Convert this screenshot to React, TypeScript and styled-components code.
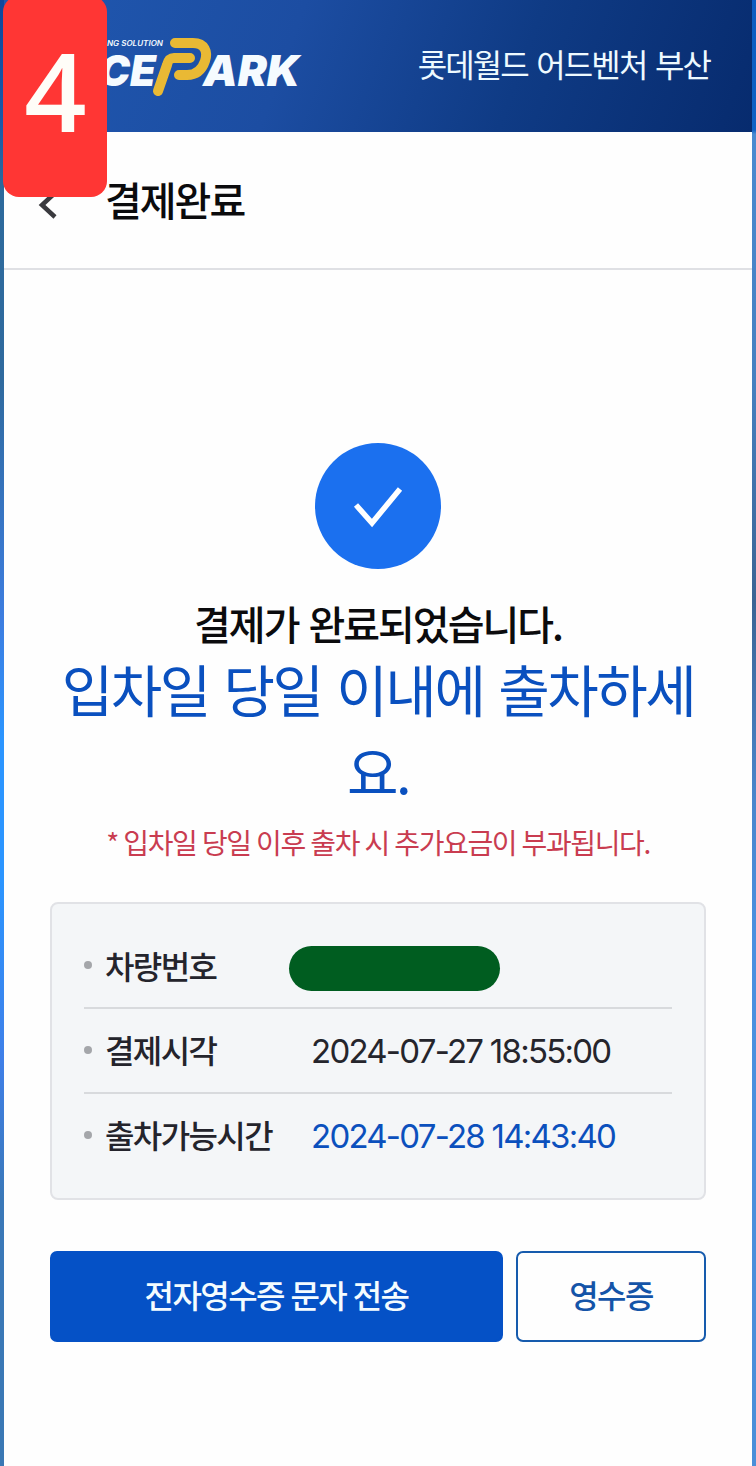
import React from "react";
import styled, { createGlobalStyle } from "styled-components";

const Global = createGlobalStyle`
  * { box-sizing: border-box; }
  html, body { margin: 0; padding: 0; }
  body { font-family: "Noto Sans CJK KR", sans-serif; color: #0b0b0d; }
`;

const Frame = styled.div`
  position: relative;
  width: 756px;
  height: 1466px;
  padding: 0 4px;
  overflow: hidden;
  background:
    linear-gradient(180deg, #0f479c 0, #1a58a8 120px, #2d6a9c 190px, #2f6a9e 380px, #3d7de0 620px, #2b95ff 740px, #2b95ff 880px, #3f7fe8 1060px, #3a78b8 1200px, #3a78b4 1466px) left / 4px 100% no-repeat,
    linear-gradient(180deg, #0c5cc0 0, #0f62c4 130px, #4a8ad0 134px, #4680c0 380px, #3b6494 600px, #4a86cc 800px, #4a90e0 940px, #4a8ed8 1466px) right / 4px 100% no-repeat;
`;

const Screen = styled.main`
  display: flex;
  flex-direction: column;
  height: 100%;
  background: #fefefe;
`;

const Header = styled.header`
  display: flex;
  align-items: center;
  justify-content: space-between;
  height: 132px;
  flex: none;
  padding: 0 42px 0 92px;
  background: linear-gradient(110deg, #2058b0 0%, #1c4da2 38%, #0f3b85 68%, #072b6e 100%);
`;

const Logo = styled.svg`
  display: block;
  width: 210px;
  height: 132px;
`;

interface LineProps {
  $size: number;
  $spacing: number;
  $word?: number;
  $weight?: number;
  $color?: string;
  $height?: number;
  $lift?: number;
}

const Line = styled.span<LineProps>`
  display: block;
  padding-bottom: ${(p) => p.$lift ?? 0}px;
  font-size: ${(p) => p.$size}px;
  letter-spacing: ${(p) => p.$spacing}px;
  word-spacing: ${(p) => p.$word ?? 0}px;
  font-weight: ${(p) => p.$weight ?? 400};
  color: ${(p) => p.$color ?? "inherit"};
  line-height: ${(p) => (p.$height ? `${p.$height}px` : "1.4")};
  white-space: nowrap;
`;

const TitleBar = styled.div`
  display: flex;
  align-items: center;
  height: 138px;
  flex: none;
  padding: 0 0 0 34px;
  gap: 47px;
  border-bottom: 2px solid #dfe0e4;
`;

const BackIcon = styled.svg`
  width: 20px;
  height: 30px;
  margin-top: 8px;
`;

const Badge = styled.div`
  position: absolute;
  left: 3px;
  top: -4px;
  width: 104px;
  height: 201px;
  border-radius: 16px;
  background: #ff3634;
  color: #fffdf8;
  font: 600 109px/187px "Open Sans", sans-serif;
  text-align: center;
  text-indent: 1px;
`;

const Content = styled.section`
  display: flex;
  flex-direction: column;
  align-items: center;
  padding: 173px 46px 0;
`;

const CheckIcon = styled.svg`
  width: 126px;
  height: 126px;
  margin-bottom: 30px;
`;

const Emphasis = styled.p`
  margin: 0 0 8px;
  text-align: center;
  color: #0a50bf;
`;

const Details = styled.dl`
  width: 656px;
  height: 298px;
  margin: 37px 0 51px;
  padding: 20px 32px;
  border: 2px solid #e1e2e6;
  border-radius: 8px;
  background: #f4f6f8;
`;

const Row = styled.div`
  display: flex;
  align-items: center;
  height: 85px;
  border-bottom: 2px solid #d8dadd;
  &:last-child { border-color: transparent; }
`;

const Label = styled.dt`
  display: flex;
  align-items: center;
  gap: 13px;
  width: 227px;
  color: #24242c;
  &::before {
    content: "";
    width: 8px;
    height: 8px;
    border-radius: 50%;
    background: #a4a6aa;
  }
`;

const Value = styled.dd<{ $accent?: boolean }>`
  margin: 0;
  font: 400 33px/40px Inter, "Noto Sans CJK KR", sans-serif;
  letter-spacing: -1.75px;
  white-space: nowrap;
  color: ${(p) => (p.$accent ? "#0b50bd" : "#25252c")};
`;

const Redaction = styled.dd`
  width: 211px;
  height: 45px;
  margin: 5px 0 0 -22px;
  border-radius: 23px;
  background: #005d20;
`;

const Actions = styled.div`
  display: flex;
  gap: 13px;
  width: 656px;
`;

const Button = styled.button<{ $primary?: boolean }>`
  display: flex;
  align-items: center;
  justify-content: center;
  width: ${(p) => (p.$primary ? 453 : 190)}px;
  height: 91px;
  padding: 0;
  border: 2px solid ${(p) => (p.$primary ? "#0551c6" : "#165bad")};
  border-radius: 7px;
  background: ${(p) => (p.$primary ? "#0551c6" : "#fefefe")};
  color: ${(p) => (p.$primary ? "#f4fcff" : "#1454a8")};
  font-family: inherit;
`;

export default function App() {
  return (
    <>
      <Global />
      <Frame>
        <Screen>
          <Header>
            <Logo viewBox="96 0 210 132">
              <g fill="#f5fbff" fontFamily="Inter, sans-serif" fontStyle="italic" fontWeight="900">
                <text x="107" y="46" fontSize="7" fontWeight="600" textLength="56" lengthAdjust="spacingAndGlyphs">NG SOLUTION</text>
                <text x="99" y="86" fontSize="43" textLength="57" lengthAdjust="spacingAndGlyphs">CE</text>
                <text x="203" y="86" fontSize="43" textLength="97" lengthAdjust="spacingAndGlyphs">ARK</text>
              </g>
              <path d="M175 43H193C205 43 208 52 205 61C202 70 196 75 187 75H179M190 58H174C169 58 168 61 167 65L158 91" fill="none" stroke="#e9b934" strokeWidth="10" strokeLinecap="round" strokeLinejoin="round" />
            </Logo>
            <Line $size={32} $spacing={-1.9} $word={3.2} $lift={6} $color="#eefaff">롯데월드 어드벤처 부산</Line>
          </Header>
          <TitleBar>
            <BackIcon viewBox="0 0 20 30">
              <path d="M18 3L4 16L17 28" fill="none" stroke="#3a3a3e" strokeWidth="4.5" />
            </BackIcon>
            <Line $size={40} $spacing={-2} $weight={500} $lift={2}>결제완료</Line>
          </TitleBar>
          <Content>
            <CheckIcon viewBox="0 0 126 126">
              <circle cx="63" cy="63" r="63" fill="#1b70ef" />
              <path d="M41 62L57 80L85 46" fill="none" stroke="#fff" strokeWidth="5.5" />
            </CheckIcon>
            <Line $size={40} $spacing={-2} $word={3} $height={48} $weight={500}>결제가 완료되었습니다.</Line>
            <Emphasis>
              <Line $size={56} $spacing={-2.5} $word={4.7} $height={82}>입차일 당일 이내에 출차하세</Line>
              <Line $size={56} $spacing={-2.5} $height={82}>요.</Line>
            </Emphasis>
            <Line $size={28} $spacing={-1.4} $word={0.6} $height={46} $color="#c93c50">* 입차일 당일 이후 출차 시 추가요금이 부과됩니다.</Line>
            <Details>
              <Row>
                <Label><Line $size={32} $spacing={-1.6} $weight={500} $lift={1}>차량번호</Line></Label>
                <Redaction />
              </Row>
              <Row>
                <Label><Line $size={32} $spacing={-1.6} $weight={500} $lift={2}>결제시각</Line></Label>
                <Value>2024-07-27 18:55:00</Value>
              </Row>
              <Row>
                <Label><Line $size={32} $spacing={-1.6} $weight={500} $lift={2}>출차가능시간</Line></Label>
                <Value $accent>2024-07-28 14:43:40</Value>
              </Row>
            </Details>
            <Actions>
              <Button $primary><Line $size={32} $spacing={-1.6} $word={1} $weight={500} $lift={5}>전자영수증 문자 전송</Line></Button>
              <Button><Line $size={32} $spacing={-1.6} $weight={500} $lift={5}>영수증</Line></Button>
            </Actions>
          </Content>
        </Screen>
        <Badge>4</Badge>
      </Frame>
    </>
  );
}
